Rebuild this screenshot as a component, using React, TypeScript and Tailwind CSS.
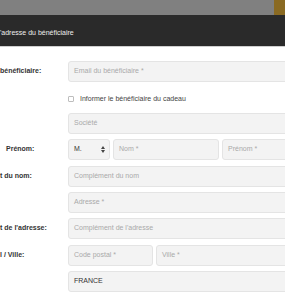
import React from "react";

const font = { fontFamily: '"Liberation Sans", Arial, Helvetica, sans-serif' };

function Field({ text, value, className = "" }: { text: string; value?: boolean; className?: string }) {
  return (
    <div
      className={`h-full flex items-center pl-[5px] bg-[#f3f3f3] border border-[#e4e4e4] rounded-[3px] text-[7px] whitespace-nowrap overflow-hidden ${
        value ? "text-[#333]" : "text-[#a9a9a9]"
      } ${className}`}
    >
      {text}
    </div>
  );
}

function Row({ label, labelPad = "", h, children }: { label?: string; labelPad?: string; h: string; children: React.ReactNode }) {
  return (
    <div className={`flex ${h}`}>
      <div className={`w-[68px] shrink-0 h-[21px] flex items-center text-[7px] font-bold text-[#333] whitespace-nowrap overflow-hidden ${labelPad}`}>
        {label}
      </div>
      <div className="flex-1 h-[21px] flex gap-[3px] min-w-0">{children}</div>
    </div>
  );
}

export default function App() {
  return (
    <div className="w-[285px] h-[300px] overflow-hidden bg-white" style={font}>
      <div className="h-[15px] bg-[#808080] flex justify-end">
        <div className="w-[11px] h-full bg-[#8a6a22]" />
      </div>
      <div className="h-[32px] bg-[#2a2a2a] border-b border-[#cfcfcf] flex items-center pt-[5px] text-[7px] text-[#eeeeee] whitespace-nowrap">
        'adresse du bénéficiaire
      </div>
      <div className="pt-[14px] flex flex-col w-[300px]">
        <Row label="bénéficiaire:" h="h-[26px]">
          <Field text="Email du bénéficiaire *" className="flex-1" />
        </Row>
        <Row h="h-[26px]">
          <div className="flex items-center h-full pt-[3px] text-[7px] text-[#444] whitespace-nowrap">
            <div className="w-[6px] h-[6px] border border-[#bdbdbd] rounded-[1px] bg-white mr-[6px] shrink-0" />
            Informer le bénéficiaire du cadeau
          </div>
        </Row>
        <Row h="h-[26px]">
          <Field text="Société" className="flex-1" />
        </Row>
        <Row label="Prénom:" labelPad="pl-[6px]" h="h-[27px]">
          <div className="w-[42px] shrink-0 h-full flex items-center justify-between pl-[5px] pr-[4px] bg-[#f3f3f3] border border-[#e4e4e4] rounded-[3px] text-[7px] text-[#333]">
            M.
            <svg width="4" height="7" viewBox="0 0 4 7">
              <path d="M0 3 L2 0 L4 3 Z" fill="#444" />
              <path d="M0 4 L2 7 L4 4 Z" fill="#444" />
            </svg>
          </div>
          <Field text="Nom *" className="w-[106px] shrink-0" />
          <Field text="Prénom *" className="flex-1" />
        </Row>
        <Row label="t du nom:" h="h-[26px]">
          <Field text="Complément du nom" className="flex-1" />
        </Row>
        <Row h="h-[26px]">
          <Field text="Adresse *" className="flex-1" />
        </Row>
        <Row label="t de l'adresse:" h="h-[27px]">
          <Field text="Complément de l'adresse" className="flex-1" />
        </Row>
        <Row label="l / Ville:" h="h-[26px]">
          <Field text="Code postal *" className="w-[85px] shrink-0" />
          <Field text="Ville *" className="flex-1" />
        </Row>
        <Row h="h-[26px]">
          <Field text="FRANCE" value className="flex-1" />
        </Row>
      </div>
    </div>
  );
}
